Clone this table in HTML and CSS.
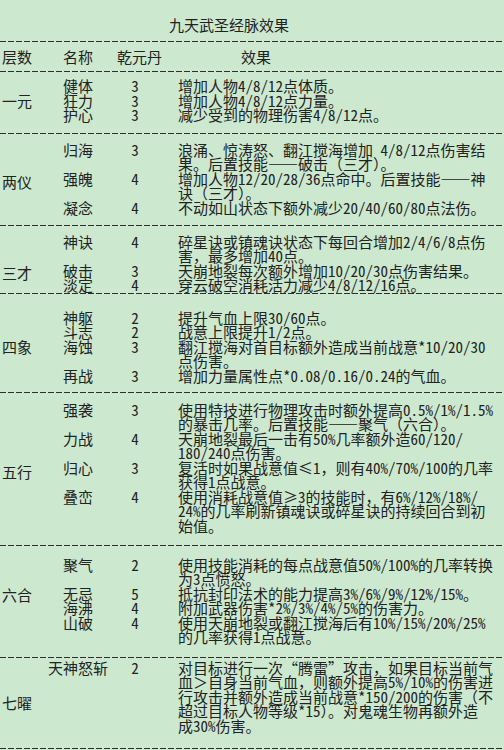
FILE: index.html
```html
<!DOCTYPE html>
<html lang="zh-CN">
<head>
<meta charset="utf-8">
<title>九天武圣经脉效果</title>
<link rel="stylesheet" href="styles.css">
</head>
<body>
<div class="page">
  <div class="title">九天武圣经脉效果</div>
  <div class="rule"></div>
  <div class="head">
    <div class="h-layer">层数</div>
    <div class="h-name">名称</div>
    <div class="h-dan">乾元丹</div>
    <div class="h-eff">效果</div>
  </div>
  <div class="rule"></div>

  <section class="sec s1">
    <div class="layer">一元</div>
    <div class="rows">
      <div class="name">健体</div><div class="dan">3</div><div class="eff">增加人物4/8/12点体质。</div>
      <div class="name">狂力</div><div class="dan">3</div><div class="eff">增加人物4/8/12点力量。</div>
      <div class="name">护心</div><div class="dan">3</div><div class="eff">减少受到的物理伤害4/8/12点。</div>
    </div>
  </section>
  <div class="rule"></div>

  <section class="sec s2">
    <div class="layer">两仪</div>
    <div class="rows">
      <div class="name">归海</div><div class="dan">3</div><div class="eff">浪涌、惊涛怒、翻江搅海增加 4/8/12点伤害结<br>果。后置技能——破击（三才）。</div>
      <div class="name">强魄</div><div class="dan">4</div><div class="eff">增加人物12/20/28/36点命中。后置技能——神<br>诀（三才）。</div>
      <div class="name">凝念</div><div class="dan">4</div><div class="eff">不动如山状态下额外减少20/40/60/80点法伤。</div>
    </div>
  </section>
  <div class="rule"></div>

  <section class="sec s3">
    <div class="layer">三才</div>
    <div class="rows">
      <div class="name">神诀</div><div class="dan">4</div><div class="eff">碎星诀或镇魂诀状态下每回合增加2/4/6/8点伤<br>害，最多增加40点。</div>
      <div class="name">破击</div><div class="dan">3</div><div class="eff">天崩地裂每次额外增加10/20/30点伤害结果。</div>
      <div class="name">淡定</div><div class="dan">4</div><div class="eff">穿云破空消耗活力减少4/8/12/16点。</div>
    </div>
  </section>
  <div class="rule"></div>

  <section class="sec s4">
    <div class="layer">四象</div>
    <div class="rows">
      <div class="name">神躯</div><div class="dan">2</div><div class="eff">提升气血上限30/60点。</div>
      <div class="name">斗志</div><div class="dan">2</div><div class="eff">战意上限提升1/2点。</div>
      <div class="name">海蚀</div><div class="dan">3</div><div class="eff">翻江搅海对首目标额外造成当前战意*10/20/30<br>点伤害。</div>
      <div class="name">再战</div><div class="dan">3</div><div class="eff">增加力量属性点*0.08/0.16/0.24的气血。</div>
    </div>
  </section>
  <div class="rule"></div>

  <section class="sec s5">
    <div class="layer">五行</div>
    <div class="rows">
      <div class="name">强袭</div><div class="dan">3</div><div class="eff">使用特技进行物理攻击时额外提高0.5%/1%/1.5%<br>的暴击几率。后置技能——聚气（六合）。</div>
      <div class="name">力战</div><div class="dan">4</div><div class="eff">天崩地裂最后一击有50%几率额外造60/120/<br>180/240点伤害。</div>
      <div class="name">归心</div><div class="dan">3</div><div class="eff">复活时如果战意值≤1，则有40%/70%/100的几率<br>获得1点战意。</div>
      <div class="name">叠峦</div><div class="dan">4</div><div class="eff">使用消耗战意值≥3的技能时，有6%/12%/18%/<br>24%的几率刷新镇魂诀或碎星诀的持续回合到初<br>始值。</div>
    </div>
  </section>
  <div class="rule"></div>

  <section class="sec s6">
    <div class="layer">六合</div>
    <div class="rows">
      <div class="name">聚气</div><div class="dan">2</div><div class="eff">使用技能消耗的每点战意值50%/100%的几率转换<br>为3点愤怒。</div>
      <div class="name">无忌</div><div class="dan">5</div><div class="eff">抵抗封印法术的能力提高3%/6%/9%/12%/15%。</div>
      <div class="name">海沸</div><div class="dan">4</div><div class="eff">附加武器伤害*2%/3%/4%/5%的伤害力。</div>
      <div class="name">山破</div><div class="dan">4</div><div class="eff">使用天崩地裂或翻江搅海后有10%/15%/20%/25%<br>的几率获得1点战意。</div>
    </div>
  </section>
  <div class="rule"></div>

  <section class="sec s7">
    <div class="layer">七曜</div>
    <div class="rows">
      <div class="name">天神怒斩</div><div class="dan">2</div><div class="eff">对目标进行一次“腾雷”攻击，如果目标当前气<br>血＞自身当前气血，则额外提高5%/10%的伤害进<br>行攻击并额外造成当前战意*150/200的伤害（不<br>超过目标人物等级*15）。对鬼魂生物再额外造<br>成30%伤害。</div>
    </div>
  </section>
  <div class="rule"></div>
</div>
</body>
</html>
```

FILE: styles.css
```css
html, body {
  margin: 0;
  padding: 0;
}

body {
  background: #cce8cf;
  color: #222222;
  font-family: "Noto Sans Mono CJK SC", "Noto Sans CJK SC", sans-serif;
  font-size: 15px;
  line-height: 14.5px;
}

.page {
  width: 504px;
  height: 750px;
  overflow: hidden;
}

.title {
  box-sizing: border-box;
  height: 41px;
  padding: 18px 0 0 169px;
  white-space: nowrap;
}

.rule {
  height: 1px;
  background: repeating-linear-gradient(to right, #2e2e2e 0 6px, transparent 6px 8px);
}

.head {
  box-sizing: border-box;
  height: 29px;
  padding-top: 7.5px;
  display: grid;
  grid-template-columns: 48px 60px 54px 1fr;
  white-space: nowrap;
}

.h-layer { padding-left: 2px; }
.h-name { text-align: center; }
.h-dan { text-align: center; padding-left: 9px; }
.h-eff { padding-left: 79px; }

.sec {
  box-sizing: border-box;
  display: flex;
  white-space: nowrap;
}

.layer {
  width: 48px;
  flex: none;
  box-sizing: border-box;
  padding-left: 2px;
  align-self: center;
}

.rows {
  flex: 1;
  display: grid;
  grid-template-columns: 60px 54px 1fr;
  align-items: start;
}

.name { text-align: center; }
.dan { text-align: center; }
.eff { padding-left: 16px; }

.s1 { padding: 7px 0 10.5px; }
.s2 { padding: 8.75px 0 9.75px; }
.s3 { padding: 8.75px 0 0.25px; }
.s4 { padding: 16.75px 0 8.75px; }
.s5 { padding: 9.75px 0 11.75px; }
.s6 { padding: 11.75px 0 12.25px; }
.s7 { padding: 2.75px 0 14.75px; }

.s2 .layer { margin-top: 6px; }
.s3 .layer { margin-top: 18px; }
.s5 .layer { margin-top: 8px; }
.s6 .layer { margin-bottom: 12px; }
.s7 .layer { margin-top: 12px; }
```
